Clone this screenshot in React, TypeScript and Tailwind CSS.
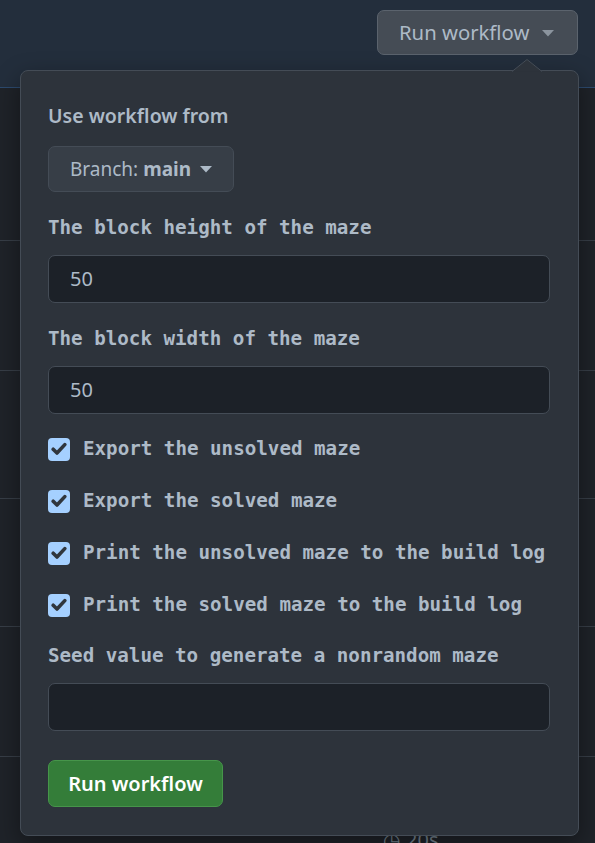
import React from "react";

const sans = { fontFamily: '"Noto Sans", "Open Sans", Arial, sans-serif' };
const mono = { fontFamily: '"DejaVu Sans Mono", "Liberation Mono", monospace' };

function Caret({ className }: { className?: string }) {
  return (
    <svg width="12" height="7" viewBox="0 0 12 7" className={className}>
      <path d="M0 0 L12 0 L6 6.5 Z" fill="currentColor" />
    </svg>
  );
}

function Check() {
  return (
    <div className="w-[22px] h-[23px] rounded-[4px] bg-[#a5d0ff] flex items-center justify-center shrink-0">
      <svg width="16" height="14" viewBox="0 0 16 14">
        <path d="M2.2 7.2 L6 11 L13.8 2.6" fill="none" stroke="#30363d" strokeWidth="3.6" strokeLinecap="round" strokeLinejoin="round" />
      </svg>
    </div>
  );
}

function Row({ label }: { label: string }) {
  return (
    <div className="flex items-center h-[28px] gap-[13px]">
      <Check />
      <span className="text-[19.2px] font-bold text-[#adbac7] whitespace-nowrap" style={mono}>
        {label}
      </span>
    </div>
  );
}

function Input({ value }: { value?: string }) {
  return (
    <div className="h-[48px] rounded-[7px] bg-[#1c2128] border border-[#444c56] flex items-center px-[21px] text-[20px] text-[#adbac7]" style={sans}>
      {value}
    </div>
  );
}

export default function App() {
  return (
    <div className="relative w-[595px] h-[843px] overflow-hidden bg-[#1f2329]" style={sans}>
      <div className="h-[88px] bg-[#232e3c] border-b border-[#2c4a6e] flex items-start justify-end pr-[17px] pt-[10px]">
        <div className="h-[45px] w-[201px] rounded-[7px] bg-[#454c55] border border-[#5b636d] flex items-center pl-[21px] gap-[13px] text-[20.3px] text-[#adbac7]">
          <span>Run workflow</span>
          <Caret className="text-[#8b949e] mt-[2px]" />
        </div>
      </div>
      <div className="flex flex-col">
        <div className="h-[153px] border-b border-[#373e47]" />
        <div className="h-[130px] border-b border-[#373e47]" />
        <div className="h-[128px] border-b border-[#373e47]" />
        <div className="h-[128px] border-b border-[#373e47]" />
        <div className="h-[130px] border-b border-[#373e47]" />
        <div className="h-[86px] flex items-start pl-[383px] pt-[68px] gap-[6px] text-[20px] text-[#768390]">
          <span>◷</span>
          <span>20s</span>
        </div>
      </div>

      <div className="absolute left-[20px] top-[70px] w-[559px] h-[766px] rounded-[8px] bg-[#2d333b] border border-[#444c56] shadow-[0_8px_24px_rgba(0,0,0,0.4)]">
        <svg className="absolute left-[491px] top-[-12px]" width="30" height="13" viewBox="0 0 30 13">
          <path d="M0 12.5 L15 0.5 L30 12.5" fill="#2d333b" stroke="#444c56" strokeWidth="1" />
        </svg>
        <div className="flex flex-col pl-[27px] pr-[28px] pt-[31px]">
          <div className="h-[28px] flex items-center text-[19.5px] font-semibold text-[#adbac7]">Use workflow from</div>
          <div className="mt-[16px] self-start h-[46px] w-[186px] rounded-[7px] bg-[#373e47] border border-[#444c56] flex items-center pl-[21px] gap-[9px] text-[19px] text-[#adbac7]">
            <span>
              Branch: <span className="font-bold">main</span>
            </span>
            <Caret className="text-[#adbac7]" />
          </div>
          <div className="mt-[22px] h-[28px] flex items-center text-[19.2px] font-bold text-[#adbac7]" style={mono}>
            The block height of the maze
          </div>
          <div className="mt-[13px]">
            <Input value="50" />
          </div>
          <div className="mt-[22px] h-[28px] flex items-center text-[19.2px] font-bold text-[#adbac7]" style={mono}>
            The block width of the maze
          </div>
          <div className="mt-[13px]">
            <Input value="50" />
          </div>
          <div className="mt-[21px] flex flex-col gap-[24px]">
            <Row label="Export the unsolved maze" />
            <Row label="Export the solved maze" />
            <Row label="Print the unsolved maze to the build log" />
            <Row label="Print the solved maze to the build log" />
          </div>
          <div className="mt-[23px] h-[28px] flex items-center text-[19.2px] font-bold text-[#adbac7]" style={mono}>
            Seed value to generate a nonrandom maze
          </div>
          <div className="mt-[13px]">
            <Input />
          </div>
          <div className="mt-[29px] self-start h-[47px] w-[175px] rounded-[7px] bg-[#347d39] border border-[#46954a] flex items-center justify-center text-[20px] font-semibold text-white">
            Run workflow
          </div>
        </div>
      </div>
    </div>
  );
}
